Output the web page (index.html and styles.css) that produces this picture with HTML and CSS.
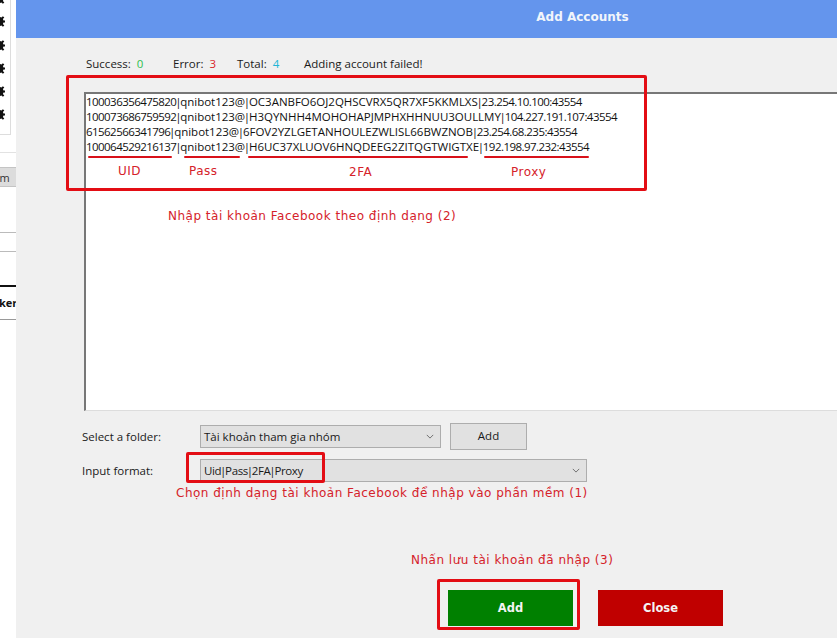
FILE: index.html
```html
<!DOCTYPE html>
<html lang="vi">
<head>
<meta charset="utf-8">
<title>Add Accounts</title>
<link rel="stylesheet" href="styles.css">
</head>
<body>
<div class="page">
  <aside class="side">
    <div class="gears">
      <svg class="gear" viewBox="0 0 12 12"><path d="M5 0h2v2l1.500.6 1.400-1.400 1.400 1.400-1.400 1.400.6 1.500h2v2h-2l-.6 1.500 1.400 1.400-1.400 1.400-1.400-1.400-1.500.6v2H5v-2l-1.500-.6-1.400 1.400-1.400-1.400 1.400-1.400L1.500 7h-2V5h2l.6-1.500L.7 2.100l1.400-1.400 1.400 1.400L5 2z"/></svg>
      <svg class="gear" viewBox="0 0 12 12"><path d="M5 0h2v2l1.500.6 1.400-1.400 1.400 1.400-1.400 1.400.6 1.500h2v2h-2l-.6 1.500 1.400 1.400-1.400 1.400-1.400-1.400-1.500.6v2H5v-2l-1.500-.6-1.400 1.400-1.400-1.400 1.400-1.400L1.500 7h-2V5h2l.6-1.500L.7 2.100l1.400-1.400 1.400 1.400L5 2z"/></svg>
      <svg class="gear" viewBox="0 0 12 12"><path d="M5 0h2v2l1.500.6 1.400-1.400 1.400 1.400-1.400 1.400.6 1.500h2v2h-2l-.6 1.500 1.400 1.400-1.400 1.400-1.400-1.400-1.500.6v2H5v-2l-1.500-.6-1.400 1.400-1.400-1.400 1.400-1.400L1.500 7h-2V5h2l.6-1.500L.7 2.100l1.400-1.400 1.400 1.400L5 2z"/></svg>
      <svg class="gear" viewBox="0 0 12 12"><path d="M5 0h2v2l1.500.6 1.400-1.400 1.400 1.400-1.400 1.400.6 1.500h2v2h-2l-.6 1.500 1.400 1.400-1.400 1.400-1.400-1.400-1.500.6v2H5v-2l-1.500-.6-1.400 1.400-1.400-1.400 1.400-1.400L1.500 7h-2V5h2l.6-1.500L.7 2.100l1.400-1.400 1.400 1.400L5 2z"/></svg>
      <svg class="gear" viewBox="0 0 12 12"><path d="M5 0h2v2l1.500.6 1.400-1.400 1.400 1.400-1.400 1.400.6 1.500h2v2h-2l-.6 1.500 1.400 1.400-1.400 1.400-1.400-1.400-1.500.6v2H5v-2l-1.500-.6-1.400 1.400-1.400-1.400 1.400-1.400L1.500 7h-2V5h2l.6-1.500L.7 2.100l1.400-1.400 1.400 1.400L5 2z"/></svg>
      <svg class="gear" viewBox="0 0 12 12"><path d="M5 0h2v2l1.500.6 1.400-1.400 1.400 1.400-1.400 1.400.6 1.500h2v2h-2l-.6 1.500 1.400 1.400-1.400 1.400-1.400-1.400-1.500.6v2H5v-2l-1.500-.6-1.400 1.400-1.400-1.400 1.400-1.400L1.500 7h-2V5h2l.6-1.500L.7 2.100l1.400-1.400 1.400 1.400L5 2z"/></svg>
    </div>
    <div class="side-rule"></div>
    <div class="side-tab">om</div>
    <div class="side-row"></div>
    <div class="side-row short"></div>
    <div class="side-head">ker</div>
  </aside>
  <main class="dialog">
    <header class="titlebar">Add Accounts</header>
    <section class="content">
      <div class="status">
        <span>Success: <b class="ok">0</b></span>
        <span>Error: <b class="err">3</b></span>
        <span>Total: <b class="tot">4</b></span>
        <span>Adding account failed!</span>
      </div>
      <div class="input-box">
        <div><span class="num">100036356475820</span><span class="sep">|</span>qnibot123@<span class="sep">|</span>OC3ANBFO6OJ2QHSCVRX5QR7XF5KKMLXS<span class="sep">|</span><span class="num">23.254.10.100:43554</span></div>
        <div><span class="num">100073686759592</span><span class="sep">|</span>qnibot123@<span class="sep">|</span>H3QYNHH4MOHOHAPJMPHXHHNUU3OULLMY<span class="sep">|</span><span class="num">104.227.191.107:43554</span></div>
        <div><span class="num">61562566341796</span><span class="sep">|</span>qnibot123@<span class="sep">|</span>6FOV2YZLGETANHOULEZWLISL66BWZNOB<span class="sep">|</span><span class="num">23.254.68.235:43554</span></div>
        <div><span class="num">100064529216137</span><span class="sep">|</span>qnibot123@<span class="sep">|</span>H6UC37XLUOV6HNQDEEG2ZITQGTWIGTXE<span class="sep">|</span><span class="num">192.198.97.232:43554</span></div>
      </div>
      <div class="form-row first">
        <label class="form-label">Select a folder:</label>
        <div class="select narrow"><span>Tài khoản tham gia nhóm</span><svg class="chev" viewBox="0 0 10 6"><path d="M1 1l4 4 4-4"/></svg></div>
        <div class="btn-add">Add</div>
      </div>
      <div class="form-row">
        <label class="form-label">Input format:</label>
        <div class="select wide"><span class="format">Uid<span class="sep">|</span>Pass<span class="sep">|</span>2FA<span class="sep">|</span>Proxy</span><svg class="chev" viewBox="0 0 10 6"><path d="M1 1l4 4 4-4"/></svg></div>
      </div>
      <div class="actions">
        <div class="action ok-btn">Add</div>
        <div class="action close-btn">Close</div>
      </div>
    </section>
  </main>
</div>

<div class="mark box-input"></div>
<div class="mark box-format"></div>
<div class="mark box-add"></div>
<div class="line l1"></div>
<div class="line l2"></div>
<div class="line l3"></div>
<div class="line l4"></div>
<span class="note n-uid">UID</span>
<span class="note n-pass">Pass</span>
<span class="note n-2fa">2FA</span>
<span class="note n-proxy">Proxy</span>
<span class="note n-2">Nhập tài khoản Facebook theo định dạng (2)</span>
<span class="note n-1">Chọn định dạng tài khoản Facebook để nhập vào phần mềm (1)</span>
<span class="note n-3">Nhấn lưu tài khoản đã nhập (3)</span>
</body>
</html>
```
FILE: styles.css
```css
* { box-sizing: border-box; }
html, body { margin: 0; padding: 0; }
body {
  width: 837px;
  height: 638px;
  overflow: hidden;
  position: relative;
  background: #f0f0f0;
  font-family: "Open Sans", "Noto Sans", sans-serif;
  font-size: 11.500px;
  color: #1a1a1a;
}
.page { display: flex; height: 638px; }
.side {
  width: 16px;
  flex: none;
  background: #fff;
  overflow: hidden;
  font-size: 11px;
}
.gears {
  height: 143px;
  margin: -8px 5px 0 -5px;
  border-right: 1px solid #ddd;
  border-bottom: 1px solid #ddd;
  display: flex;
  flex-direction: column;
  align-items: flex-end;
  gap: 11.300px;
}
.gear { width: 12px; height: 12px; flex: none; margin-right: 5px; fill: #111; }
.side-rule { margin-top: 17px; height: 1px; background: #e2e2e2; }
.side-tab {
  margin-top: 14px;
  height: 20px;
  line-height: 19px;
  background: #dcdcdc;
  border-top: 1px solid #c4c4c4;
  border-bottom: 1px solid #c4c4c4;
  text-indent: -7px;
  white-space: nowrap;
  color: #333;
}
.side-row { height: 46px; border-bottom: 1px solid #bbb; }
.side-row.short { height: 19px; }
.side-head {
  margin-top: 33px;
  height: 35px;
  border-top: 2px solid #111;
  border-bottom: 1px solid #999;
  font-weight: 700;
  line-height: 32px;
  text-indent: -1px;
  white-space: nowrap;
  color: #111;
}
.dialog { flex: 1; min-width: 0; display: flex; flex-direction: column; }
.titlebar {
  height: 38px;
  background: #6495ed;
  color: #f2f5fb;
  font-family: "DejaVu Sans", sans-serif;
  font-weight: 700;
  font-size: 12px;
  text-align: center;
  line-height: 34px;
  padding-left: 312px;
  white-space: nowrap;
}
.content { flex: 1; padding: 17px 0 0 68px; }
.status {
  display: grid;
  grid-template-columns: 87px 64px 67px auto;
  height: 17px;
  line-height: 17px;
  padding-left: 2px;
}
.status b { font-weight: 400; margin-left: 3px; }
.ok { color: #2fbf4f; }
.err { color: #d9252a; }
.tot { color: #1fb5d6; }
.input-box {
  margin-top: 20px;
  height: 319px;
  background: #fff;
  border-top: 2px solid #777;
  border-left: 2px solid #777;
  border-bottom: 1px solid #ddd;
  padding: 0;
  line-height: 15px;
  font-size: 11.500px;
  letter-spacing: -.02px;
  white-space: nowrap;
  color: #111;
}
.num { letter-spacing: -.55px; }
.sep { letter-spacing: 0; margin: 0 -1.250px; }
.form-row { display: flex; align-items: center; margin-top: 9px; }
.form-row.first { margin-top: 12px; }
.form-label { width: 118px; margin-left: -2px; }
.select {
  height: 23px;
  background: #e1e1e1;
  border: 1px solid #adadad;
  display: flex;
  align-items: center;
  justify-content: space-between;
  padding: 0 6px 0 3px;
}
.select.narrow { width: 241px; }
.select.wide { width: 387px; }
.format { letter-spacing: -.35px; }
.chev { width: 8px; height: 5px; fill: none; stroke: #555; stroke-width: 1; }
.btn-add {
  width: 77px;
  height: 27px;
  margin-left: 9px;
  background: #e1e1e1;
  border: 1px solid #adadad;
  text-align: center;
  line-height: 23px;
}
.actions { display: flex; gap: 25px; margin-top: 108px; padding-left: 364px; }
.action {
  width: 125px;
  height: 36px;
  color: #f4f4f4;
  font-family: "DejaVu Sans", sans-serif;
  font-weight: 700;
  font-size: 11.500px;
  text-align: center;
  line-height: 36px;
}
.ok-btn { background: #008000; }
.close-btn { background: #c00000; }

.mark {
  position: absolute;
  border: 3px solid #e30d14;
  border-radius: 2px;
}
.box-input { left: 66px; top: 75px; width: 581px; height: 116px; }
.box-format { left: 186px; top: 452px; width: 139px; height: 31px; }
.box-add { left: 437px; top: 579px; width: 143px; height: 51px; }
.line { position: absolute; top: 156px; height: 2px; background: #d8111a; border-radius: 1px; }
.l1 { left: 88px; width: 84px; }
.l2 { left: 184px; width: 56px; }
.l3 { left: 248px; width: 220px; }
.l4 { left: 484px; width: 105px; }
.note {
  position: absolute;
  color: #d5222a;
  font-family: "DejaVu Sans", sans-serif;
  font-size: 12px;
  letter-spacing: .5px;
  white-space: nowrap;
}
.n-uid { left: 118px; top: 164px; }
.n-pass { left: 189px; top: 164px; }
.n-2fa { left: 349px; top: 165px; }
.n-proxy { left: 511px; top: 165px; }
.n-2 { left: 168px; top: 209px; }
.n-1 { left: 176px; top: 486px; }
.n-3 { left: 411px; top: 553px; }
```
